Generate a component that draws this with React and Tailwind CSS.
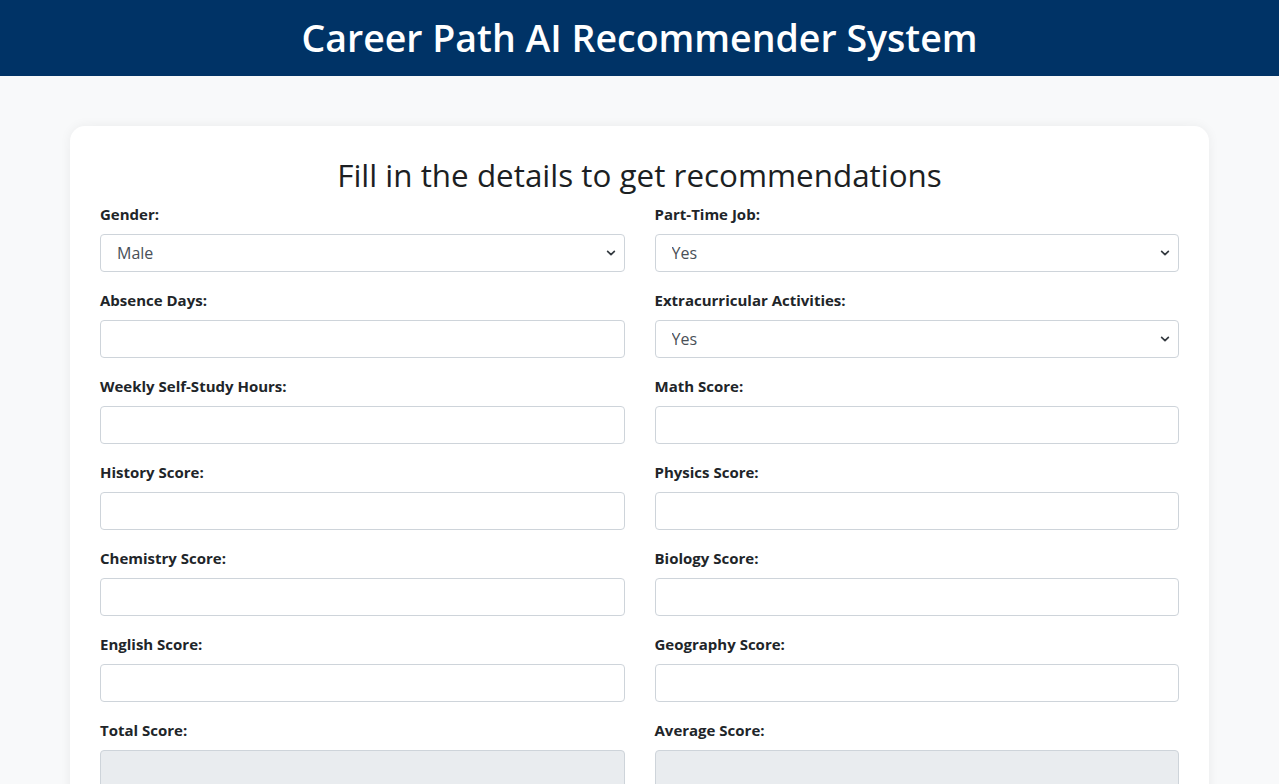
import { Fragment, useState } from 'react'

const font = { fontFamily: '"Open Sans", "Noto Sans", "Liberation Sans", sans-serif' }

const Chevron = () => (
    <svg className="pointer-events-none absolute right-[9px] top-1/2 h-[9px] w-[10px] -translate-y-1/2 text-[#343a40]" viewBox="0 0 16 16" fill="none">
        <path d="M2 5l6 6 6-6" stroke="currentColor" strokeWidth="3" strokeLinecap="round" strokeLinejoin="round" />
    </svg>
)

const Field = ({ label, children }) => (
    <div className="mb-4">
        <label className="mb-2 block text-[15px] leading-6 font-bold text-[#212529]">{label}</label>
        {children}
    </div>
)

const TextInput = ({ readOnly }) => (
    <input
        type="text"
        readOnly={readOnly}
        className={`block h-[38px] w-full rounded border border-[#ced4da] px-3 text-base text-[#495057] outline-none ${readOnly ? 'bg-[#e9ecef]' : 'bg-white'}`}
    />
)

const Select = ({ value, options }) => {
    const [v, setV] = useState(value)
    return (
        <div className="relative">
            <select
                value={v}
                onChange={(e) => setV(e.target.value)}
                className="block h-[38px] w-full appearance-none rounded border border-[#ced4da] bg-white pl-4 pr-9 text-base text-[#495057] outline-none"
            >
                {options.map((o) => <option key={o}>{o}</option>)}
            </select>
            <Chevron />
        </div>
    )
}

const rows = [
    ['Absence Days:', 'Extracurricular Activities:', true],
    ['Weekly Self-Study Hours:', 'Math Score:', false],
    ['History Score:', 'Physics Score:', false],
    ['Chemistry Score:', 'Biology Score:', false],
    ['English Score:', 'Geography Score:', false],
]

export default function App() {
    return (
        <div className="min-h-screen bg-[#f8f9fa]" style={font}>
            <header className="flex h-[76px] items-center justify-center bg-[#003366]">
                <h1 className="text-[37.5px] leading-tight font-semibold text-white">Career Path AI Recommender System</h1>
            </header>

            <main className="px-[70px] pt-[50px] pb-10">
                <div className="rounded-[15px] bg-white p-[30px] shadow-[0_0_12px_rgba(0,0,0,0.06)]">
                    <h2 className="mb-2 text-center text-[31.4px] leading-[38px] font-medium text-[#1c1f23]">Fill in the details to get recommendations</h2>

                    <div className="grid grid-cols-2 gap-x-[30px]">
                        <Field label="Gender:">
                            <Select value="Male" options={['Male', 'Female']} />
                        </Field>
                        <Field label="Part-Time Job:">
                            <Select value="Yes" options={['Yes', 'No']} />
                        </Field>

                        {rows.map(([l1, l2, sel]) => (
                            <Fragment key={l1}>
                                <Field label={l1}>
                                    <TextInput />
                                </Field>
                                <Field label={l2}>
                                    {sel ? <Select value="Yes" options={['Yes', 'No']} /> : <TextInput />}
                                </Field>
                            </Fragment>
                        ))}

                        <Field label="Total Score:">
                            <TextInput readOnly />
                        </Field>
                        <Field label="Average Score:">
                            <TextInput readOnly />
                        </Field>
                    </div>

                    <div className="mt-2 flex justify-center">
                        <button className="rounded bg-[#003366] px-6 py-2 text-base text-white shadow-lg">Get Recommendations</button>
                    </div>
                </div>
            </main>
        </div>
    )
}
